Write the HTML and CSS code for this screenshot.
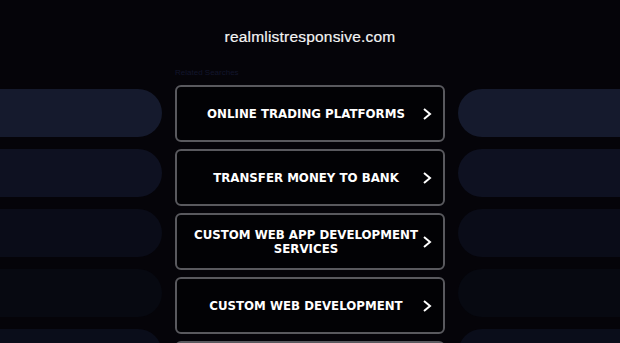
FILE: index.html
```html
<!DOCTYPE html>
<html lang="en">
<head>
    <meta charset="UTF-8">
    <meta name="viewport" content="width=device-width, initial-scale=1.0">
    <title>realmlistresponsive.com</title>
    <link rel="stylesheet" href="styles.css">
</head>
<body>
    <h1 class="domain">realmlistresponsive.com</h1>

    <div class="layout">
        <div class="side">
            <div class="pill p1"></div>
            <div class="pill p2"></div>
            <div class="pill p3"></div>
            <div class="pill p4"></div>
            <div class="pill p5"></div>
        </div>

        <div class="center">
            <p class="label">Related Searches</p>
            <a class="link" href="#">
                <span class="text">Online Trading Platforms</span>
                <svg class="chev" viewBox="0 0 10 12"><polyline points="2,1 8,6 2,11"/></svg>
            </a>
            <a class="link" href="#">
                <span class="text">Transfer Money to Bank</span>
                <svg class="chev" viewBox="0 0 10 12"><polyline points="2,1 8,6 2,11"/></svg>
            </a>
            <a class="link" href="#">
                <span class="text">Custom Web App Development Services</span>
                <svg class="chev" viewBox="0 0 10 12"><polyline points="2,1 8,6 2,11"/></svg>
            </a>
            <a class="link" href="#">
                <span class="text">Custom Web Development</span>
                <svg class="chev" viewBox="0 0 10 12"><polyline points="2,1 8,6 2,11"/></svg>
            </a>
            <a class="link" href="#"></a>
        </div>

        <div class="side right">
            <div class="pill p1"></div>
            <div class="pill p2"></div>
            <div class="pill p3"></div>
            <div class="pill p4"></div>
            <div class="pill p5"></div>
        </div>
    </div>
</body>
</html>
```

FILE: styles.css
```css
html, body {
    margin: 0;
    height: 100%;
    overflow: hidden;
}
body {
    background-color: #050409;
    font-family: "Liberation Sans", Arial, sans-serif;
    color: #fff;
}
.domain {
    margin: 0 0 21px;
    padding-top: 28px;
    font-size: 15.5px;
    line-height: 18px;
    font-weight: normal;
    text-align: center;
    color: #f4f4f4;
    letter-spacing: 0.2px;
    -webkit-text-stroke: 0.2px #f4f4f4;
}
.layout {
    display: grid;
    grid-template-columns: 162px 270px 162px;
    column-gap: 13px;
    justify-content: center;
}
.side {
    padding-top: 22px;
    display: flex;
    flex-direction: column;
    gap: 12px;
}
.pill {
    height: 48px;
    border-radius: 0 24px 24px 0;
}
.right .pill {
    border-radius: 24px 0 0 24px;
}
.p1 { background: #151a2d; }
.p2 { background: #0e1121; }
.p3 { background: #0a0c18; }
.p4 { background: #070911; }
.p5 { background: #0a0d1a; }
.center {
    display: flex;
    flex-direction: column;
    gap: 7px;
}
.label {
    margin: 0 0 -1px;
    font-size: 8px;
    line-height: 12px;
    color: #13162d;
}
.link {
    height: 53px;
    display: flex;
    align-items: center;
    padding: 0 10px 0 14px;
    border: 2px solid #59595e;
    border-radius: 6px;
    background: #020205;
    text-decoration: none;
    color: #fff;
}
.text {
    flex: 1;
    text-align: center;
    text-transform: uppercase;
    font-family: "DejaVu Sans", Verdana, sans-serif;
    font-weight: bold;
    font-size: 11.8px;
    line-height: 14px;
    letter-spacing: 0;
}
.chev {
    width: 12px;
    height: 12px;
    fill: none;
    stroke: #fff;
    stroke-width: 2;
}
```
